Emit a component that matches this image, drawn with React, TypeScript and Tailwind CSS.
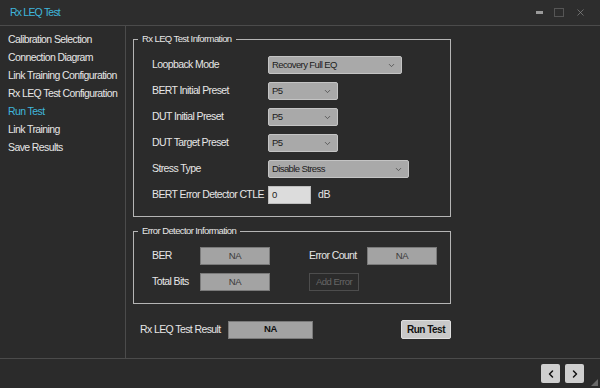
import { ChevronDown, ChevronLeft, ChevronRight, X } from 'lucide-react';

const font = { fontFamily: '"Liberation Sans", Arial, sans-serif' };

const navItems = [
  'Calibration Selection',
  'Connection Diagram',
  'Link Training Configuration',
  'Rx LEQ Test Configuration',
  'Run Test',
  'Link Training',
  'Save Results',
];

const Select = ({ value, width }: { value: string; width: string }) => (
  <div
    className={`flex h-[18px] items-center justify-between rounded-[2px] border border-[#c4c4c4] bg-[#a9a9a9] pl-[3px] pr-[5px] text-[9.5px] tracking-[-0.6px] text-[#1c1c1c] ${width}`}
  >
    <span>{value}</span>
    <ChevronDown className="h-[9px] w-[9px] text-[#444]" strokeWidth={2} />
  </div>
);

const Row = ({ label, children }: { label: string; children: React.ReactNode }) => (
  <div className="flex h-[18px] items-center">
    <span className="w-[134px] whitespace-nowrap pl-[18px] text-[10.5px] tracking-[-0.6px] text-[#e6e6e6]">{label}</span>
    {children}
  </div>
);

const NaBox = ({ bold = false, width = 'w-[70px]' }: { bold?: boolean; width?: string }) => (
  <div
    className={`flex h-[18px] items-center justify-center border border-[#7a7a7a] bg-[#a3a3a3] text-[9.5px] tracking-[-0.3px] ${width} ${bold ? 'font-bold text-[#111]' : 'text-[#3a3a3a]'}`}
  >
    NA
  </div>
);

export default function App() {
  return (
    <div className="flex h-[388px] w-[600px] flex-col overflow-hidden bg-[#2b2b2b]" style={font}>
      {/* title bar */}
      <div className="flex h-[26px] shrink-0 items-center justify-between border-b border-[#4b4b4b] bg-[#2d2d2d] pl-[10px] pr-[14px]">
        <span className="text-[10.5px] tracking-[-0.8px] text-[#3fb6dc]">Rx LEQ Test</span>
        <div className="flex items-center gap-[11px]">
          <div className="h-[3px] w-[7px] bg-[#9a9a9a]" />
          <div className="h-[9px] w-[10px] border border-[#555]" />
          <X className="h-[11px] w-[11px] text-[#8a8a8a]" strokeWidth={1.5} />
        </div>
      </div>

      <div className="flex min-h-0 flex-1">
        {/* sidebar */}
        <div className="flex w-[126px] shrink-0 flex-col gap-[4px] border-r border-[#4b4b4b] pl-[8px] pt-[6px]">
          {navItems.map((item) => (
            <div
              key={item}
              className={`h-[14px] whitespace-nowrap text-[10.5px] leading-[14px] tracking-[-0.6px] ${item === 'Run Test' ? 'text-[#3fb6dc]' : 'text-[#e6e6e6]'}`}
            >
              {item}
            </div>
          ))}
        </div>

        {/* main */}
        <div className="flex flex-1 flex-col pl-[7px] pr-[149px] pt-[6px]">
          <fieldset className="border border-[#b5b5b5] pb-[12px] pt-[10px]">
            <legend className="ml-[4px] px-[4px] text-[9.5px] leading-[14px] tracking-[-0.6px] text-[#e6e6e6]">
              Rx LEQ Test Information
            </legend>
            <div className="flex flex-col gap-[8px]">
              <Row label="Loopback Mode">
                <Select value="Recovery Full EQ" width="w-[134px]" />
              </Row>
              <Row label="BERT Initial Preset">
                <Select value="P5" width="w-[70px]" />
              </Row>
              <Row label="DUT Initial Preset">
                <Select value="P5" width="w-[70px]" />
              </Row>
              <Row label="DUT Target Preset">
                <Select value="P5" width="w-[70px]" />
              </Row>
              <Row label="Stress Type">
                <Select value="Disable Stress" width="w-[141px]" />
              </Row>
              <Row label="BERT Error Detector CTLE">
                <div className="flex h-[18px] w-[43px] items-center border border-[#bdbdbd] bg-[#dcdcdc] pl-[3px] text-[9.5px] text-[#222]">
                  0
                </div>
                <span className="ml-[7px] text-[10.5px] tracking-[-0.4px] text-[#e6e6e6]">dB</span>
              </Row>
            </div>
          </fieldset>

          <fieldset className="mt-[7px] border border-[#b5b5b5] pb-[12px] pt-[9px]">
            <legend className="ml-[4px] px-[4px] text-[9.5px] leading-[14px] tracking-[-0.6px] text-[#e6e6e6]">
              Error Detector Information
            </legend>
            <div className="flex flex-col gap-[8px] pl-[18px]">
              <div className="flex h-[18px] items-center">
                <span className="w-[48px] text-[10.5px] tracking-[-0.6px] text-[#e6e6e6]">BER</span>
                <NaBox />
                <span className="ml-[39px] w-[58px] whitespace-nowrap text-[10.5px] tracking-[-0.6px] text-[#e6e6e6]">Error Count</span>
                <NaBox />
              </div>
              <div className="flex h-[18px] items-center">
                <span className="w-[48px] whitespace-nowrap text-[10.5px] tracking-[-0.6px] text-[#e6e6e6]">Total Bits</span>
                <NaBox />
                <div className="ml-[39px] flex h-[18px] w-[50px] items-center justify-center border border-[#4d4d4d] text-[9.5px] tracking-[-0.5px] text-[#666]">
                  Add Error
                </div>
              </div>
            </div>
          </fieldset>

          <div className="mt-[16px] flex h-[19px] items-center">
            <span className="w-[95px] whitespace-nowrap pl-[7px] text-[10.5px] tracking-[-0.6px] text-[#e6e6e6]">Rx LEQ Test Result</span>
            <NaBox bold width="w-[85px]" />
            <div className="ml-auto flex h-[19px] w-[50px] items-center justify-center rounded-[2px] border border-[#e0e0e0] bg-[#c9c9c9] text-[10px] font-bold tracking-[-0.5px] text-[#111]">
              Run Test
            </div>
          </div>
        </div>
      </div>

      {/* bottom bar */}
      <div className="relative flex h-[30px] shrink-0 items-center justify-end gap-[5px] border-t border-[#4b4b4b] pr-[16px]">
        <div className="flex h-[19px] w-[19px] items-center justify-center rounded-[2px] bg-[#cfcfcf]">
          <ChevronLeft className="h-[12px] w-[12px] text-[#111]" strokeWidth={3} />
        </div>
        <div className="flex h-[19px] w-[19px] items-center justify-center rounded-[2px] bg-[#cfcfcf]">
          <ChevronRight className="h-[12px] w-[12px] text-[#111]" strokeWidth={3} />
        </div>
        <svg className="absolute bottom-[2px] right-[2px]" width="7" height="7" viewBox="0 0 7 7">
          <path d="M7 0 L7 7 L0 7 Z" fill="#6a6a6a" />
        </svg>
      </div>
    </div>
  );
}
